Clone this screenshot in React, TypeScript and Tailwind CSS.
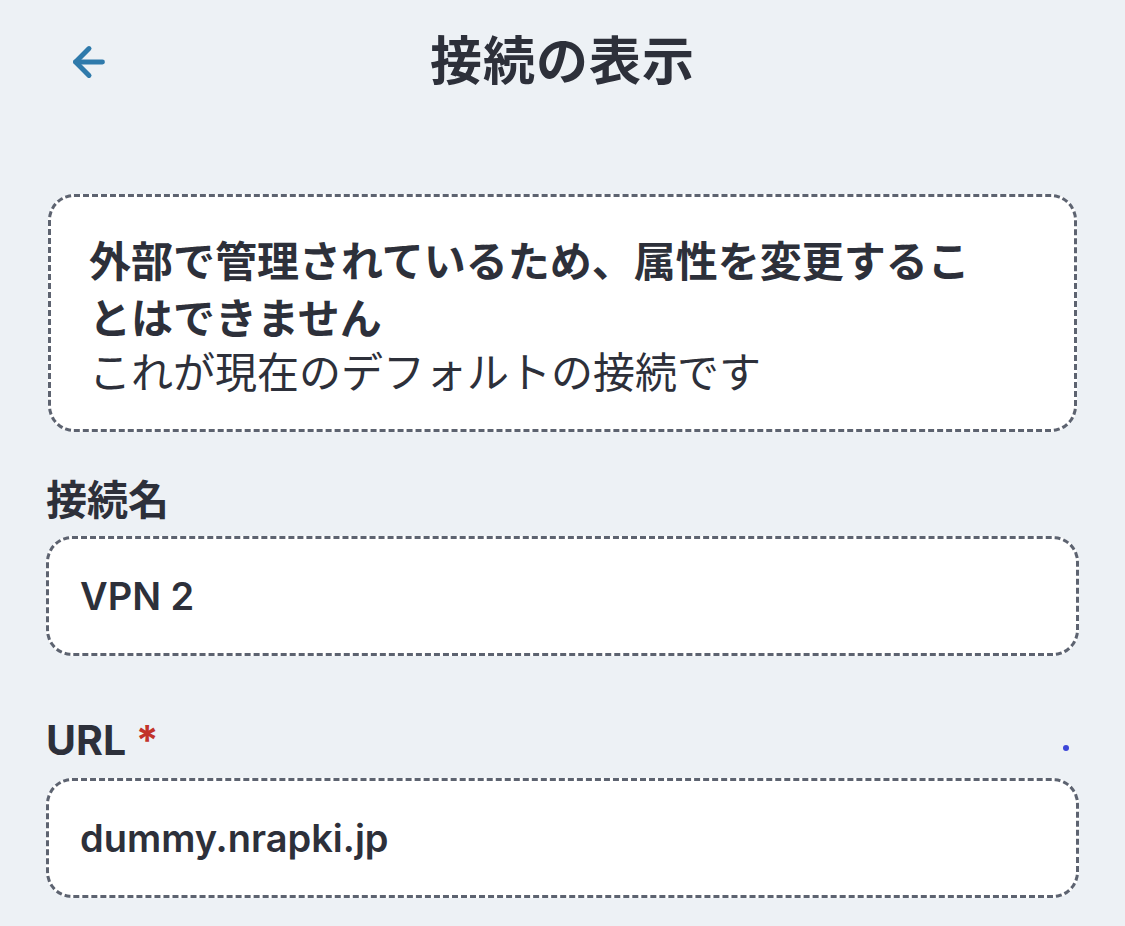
import React from "react";
import { ArrowLeft } from "lucide-react";

const FONT = "font-['Inter','Noto_Sans_CJK_JP',sans-serif]";

function Field({ value }: { value: string }) {
  return (
    <div className="rounded-[26px] border-[3px] border-dashed border-[#5d6370] bg-white px-[31px] py-[29px]">
      <div className="text-[38px] leading-[56px] font-semibold text-[#2d303a]">{value}</div>
    </div>
  );
}

export default function App() {
  return (
    <div className={`w-full h-[926px] overflow-hidden bg-[#edf1f5] ${FONT} text-[#2d303a]`}>
      {/* header */}
      <header className="grid h-[124px] grid-cols-[1fr_auto_1fr] items-center px-[66px]">
        <button className="justify-self-start text-[#2f7aab]">
          <ArrowLeft size={46} strokeWidth={2.6} />
        </button>
        <h1 className="text-[52px] font-bold tracking-[1px]">接続の表示</h1>
        <div />
      </header>

      <main className="px-[46px]">
        {/* notice */}
        <section className="mx-[2px] mt-[70px] rounded-[26px] border-[3px] border-dashed border-[#5d6370] bg-white pl-[38px] pr-[80px] pt-[36px] pb-[30px]">
          <p className="text-[42px] font-bold leading-[57px]">
            外部で管理されているため、属性を変更することはできません
          </p>
          <p className="text-[42px] font-normal leading-[52px]">これが現在のデフォルトの接続です</p>
        </section>

        {/* connection name */}
        <label className="mt-[40px] block text-[41px] font-bold leading-[56px]">接続名</label>
        <div className="mt-[8px]">
          <Field value="VPN 2" />
        </div>

        {/* url */}
        <div className="mt-[56px] flex items-center justify-between">
          <label className="text-[41px] font-bold leading-[56px]">
            URL <span className="text-[#c2332a]">*</span>
          </label>
          <span className="mr-[10px] mt-[16px] h-[6px] w-[6px] rounded-full bg-[#3c46d8]" />
        </div>
        <div className="mt-[10px]">
          <Field value="dummy.nrapki.jp" />
        </div>
      </main>
    </div>
  );
}
